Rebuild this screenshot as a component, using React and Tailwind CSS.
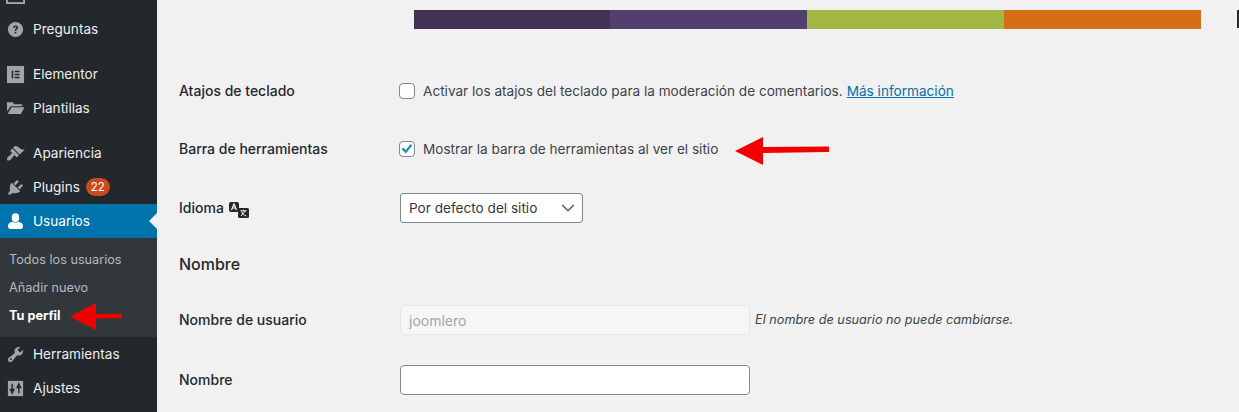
import { ChevronDown } from "lucide-react";

const font = { fontFamily: '"Inter", "Liberation Sans", sans-serif' };

const icons = {
  comments: (
    <svg viewBox="0 0 20 20" className="w-full h-full" fill="none">
      <rect x="1" y="1" width="18" height="18" stroke="#a0a5aa" strokeWidth="2" />
    </svg>
  ),
  help: (
    <svg viewBox="0 0 20 20" className="w-full h-full">
      <circle cx="10" cy="10" r="8" fill="#a0a5aa" />
      <path d="M7.4 8.2c0-1.6 1.2-2.5 2.7-2.5s2.6.9 2.6 2.2c0 1.9-2 1.9-2 3.5H9.1c0-2.3 1.8-2.4 1.8-3.4 0-.5-.4-.8-.9-.8-.6 0-.9.4-.9 1z" fill="#23282d" />
      <rect x="9.1" y="12.4" width="1.7" height="1.7" fill="#23282d" />
    </svg>
  ),
  elementor: (
    <svg viewBox="0 0 20 20" className="w-full h-full">
      <rect x="1" y="1" width="18" height="18" fill="#a0a5aa" />
      <rect x="6" y="6" width="1.6" height="8" fill="#23282d" />
      <rect x="9.2" y="6" width="5" height="1.6" fill="#23282d" />
      <rect x="9.2" y="9.2" width="5" height="1.6" fill="#23282d" />
      <rect x="9.2" y="12.4" width="5" height="1.6" fill="#23282d" />
    </svg>
  ),
  folder: (
    <svg viewBox="0 0 20 20" className="w-full h-full" fill="#a0a5aa">
      <path d="M1 3.500h6l1.500 2H17v2H5L1 13z" />
      <path d="M5.800 8.800H19.500l-3.800 7H1.600z" />
    </svg>
  ),
  brush: (
    <svg viewBox="0 0 20 20" className="w-full h-full" fill="#a0a5aa">
      <path d="M14.480 11.060L7.410 3.990l1.500-1.500c.5-.56 2.300-.47 3.510.32 1.210.8 1.430 1.280 2.910 2.100 1.180.64 2.450 1.260 4.450.85zm-.71.71L6.700 4.700 4.930 6.470c-.39.39-.39 1.020 0 1.410l1.060 1.060c.39.39.39 1.030 0 1.420-.6.6-1.430 1.110-2.210 1.690-.35.26-.7.53-1.010.84C1.430 14.230.4 16.080 1.400 17.070c.99 1 2.840-.03 4.180-1.360.31-.31.58-.66.85-1.020.57-.78 1.080-1.610 1.690-2.210.39-.39 1.020-.39 1.410 0l1.060 1.060c.39.39 1.020.39 1.410 0z" />
    </svg>
  ),
  plugin: (
    <svg viewBox="0 0 20 20" className="w-full h-full" fill="#a0a5aa">
      <path d="M13.110 4.360L9.870 7.600 8 5.730l3.240-3.240c.35-.34 1.050-.2 1.560.32.52.51.66 1.210.31 1.550zm-8 1.770l.91-1.120 9.010 9.010-1.190.84c-.71.71-2.630 1.160-3.820 1.160H6.140L4.900 17.260c-.59.59-1.540.59-2.120 0-.59-.58-.59-1.530 0-2.120l1.240-1.240v-3.880c0-1.130.4-3.190 1.090-3.890zm7.260 3.970l3.240-3.240c.34-.35 1.040-.21 1.550.31.52.51.66 1.210.31 1.550l-3.240 3.250z" />
    </svg>
  ),
  user: (
    <svg viewBox="0 0 20 20" className="w-full h-full" fill="#fff">
      <ellipse cx="10" cy="6" rx="4" ry="4.600" />
      <path d="M2 15c0-3 2.500-4.600 5-4.800 1.600 1.200 4.400 1.200 6 0 2.500.2 5 1.800 5 4.800 0 1.700-1.500 3-3.300 3H5.300C3.500 18 2 16.700 2 15z" />
    </svg>
  ),
  wrench: (
    <svg viewBox="0 0 20 20" className="w-full h-full" fill="#a0a5aa">
      <path d="M16.680 9.770c-1.340 1.340-3.300 1.670-4.950.99l-5.410 6.520c-.99.99-2.590.99-3.580 0s-.99-2.590 0-3.570l6.520-5.420c-.68-1.650-.35-3.610.99-4.950 1.280-1.280 3.120-1.620 4.720-1.060l-2.890 2.890 2.820 2.820 2.860-2.870c.56 1.600.22 3.440-1.080 4.670zM4.420 15.580c.39.39 1.020.39 1.410 0s.39-1.020 0-1.410-1.020-.39-1.410 0-.39 1.020 0 1.410z" />
    </svg>
  ),
  settings: (
    <svg viewBox="0 0 20 20" className="w-full h-full">
      <rect x="2" y="2" width="16" height="16" fill="#a0a5aa" />
      <path d="M6.500 5v6M4.700 11h3.600L6.500 14.800zM13.500 15V9M11.700 9h3.600l-1.800-3.800z" stroke="#23282d" strokeWidth="1.500" fill="#23282d" />
    </svg>
  ),
};

function NavItem({ icon, label, badge, active }) {
  return (
    <div className={`relative flex items-center h-[34px] ${active ? "bg-[#0073aa] text-white" : "text-[#eeeeee]"}`}>
      <span className="w-[30px] flex justify-center shrink-0 mr-[3px]">
        <span className="w-[19px] h-[19px] block">{icons[icon]}</span>
      </span>
      <span className="text-[13.6px]">{label}</span>
      {badge && (
        <span className="ml-[6px] h-[18px] px-[5px] rounded-full bg-[#ca4a1f] text-[11.5px] leading-[18px] text-white">
          {badge}
        </span>
      )}
      {active && (
        <span className="absolute right-0 top-[9px] w-0 h-0 border-y-[8px] border-y-transparent border-r-[8px] border-r-[#f1f1f1]" />
      )}
    </div>
  );
}

function Row({ label, extra, className, labelClass, children }) {
  return (
    <div className={`flex items-center ${className}`}>
      <div className={`w-[243px] pl-[22px] shrink-0 flex items-center gap-[5px] text-[14px] font-medium text-[#23282d] ${labelClass}`}>
        {label}
        {extra}
      </div>
      {children}
    </div>
  );
}

export default function App() {
  return (
    <div className="relative flex h-[412px] w-[1239px] overflow-hidden bg-[#f1f1f1]" style={font}>
      {/* sidebar */}
      <aside className="w-[157px] shrink-0 bg-[#23282d]">
        <div className="-mt-[23px]">
          <NavItem icon="comments" label="Comentarios" />
          <div className="mt-[1px]">
            <NavItem icon="help" label="Preguntas" />
          </div>
        </div>
        <div className="mt-[11px]">
          <NavItem icon="elementor" label="Elementor" />
          <NavItem icon="folder" label="Plantillas" />
        </div>
        <div className="mt-[11px]">
          <NavItem icon="brush" label="Apariencia" />
          <NavItem icon="plugin" label="Plugins" badge="22" />
          <NavItem icon="user" label="Usuarios" active />
        </div>
        <div className="h-[99px] bg-[#32373c] pt-[8px] pl-[9px] text-[12.7px] text-[#b4b9be]">
          <div className="h-[28px] leading-[28px]">Todos los usuarios</div>
          <div className="h-[28px] leading-[28px]">Añadir nuevo</div>
          <div className="h-[28px] leading-[28px] font-bold text-white">Tu perfil</div>
        </div>
        <NavItem icon="wrench" label="Herramientas" />
        <NavItem icon="settings" label="Ajustes" />
      </aside>

      {/* profile form */}
      <main className="flex-1 text-[13.6px] text-[#3c434a]">
        <div className="flex items-start h-[76px] pt-[10px]">
          <div className="ml-[257px] flex h-[19px]">
            <div className="w-[196px] bg-[#413256]" />
            <div className="w-[197px] bg-[#523f6d]" />
            <div className="w-[197px] bg-[#a3b745]" />
            <div className="w-[197px] bg-[#d46f15]" />
          </div>
          <div className="ml-[36px] h-[18px] w-[2px] bg-[#23282d]" />
        </div>

        <Row label="Atajos de teclado" className="h-[29px]">
          <span className="w-[16px] h-[16px] rounded-[4px] border border-[#7e8993] bg-white shrink-0 -ml-[1px]" />
          <span className="ml-[8px] pt-[2px]">Activar los atajos del teclado para la moderación de comentarios.</span>
          <a className="ml-[4px] pt-[2px] text-[#0073aa] underline">Más información</a>
        </Row>

        <Row label="Barra de herramientas" className="h-[29px] mt-[29px]">
          <span className="flex items-center justify-center w-[16px] h-[16px] rounded-[4px] border border-[#7e8993] bg-white shrink-0 -ml-[1px]">
            <svg viewBox="0 0 16 16" className="w-[16px] h-[16px] shrink-0">
              <path d="M2.500 8.200l1.800-1.700 2.500 2.600 4.800-6 1.800 1.500-6.500 8z" fill="#2a8eb5" />
            </svg>
          </span>
          <span className="ml-[8px] pt-[2px]">Mostrar la barra de herramientas al ver el sitio</span>
        </Row>

        <Row
          label="Idioma"
          labelClass="pb-[2px]"
          className="h-[30px] mt-[30px]"
          extra={
            <svg viewBox="0 0 20 18" className="w-[20px] h-[18px] mt-[3px]">
              <rect x="0" y="2" width="10" height="10" rx="2" fill="#23282d" />
              <path d="M2.500 10l2.500-6 2.500 6M3.500 8h3" stroke="#fff" strokeWidth="1.200" fill="none" />
              <rect x="9" y="8" width="11" height="10" rx="1.500" fill="#23282d" />
              <path d="M11.500 10.800h6M14.500 9.800v1M12 16l4.300-5M12.500 11.500c.8 2 2.300 3.600 4.800 4.500" stroke="#fff" strokeWidth="1" fill="none" />
            </svg>
          }
        >
          <div className="flex items-center justify-between w-[183px] h-[30px] rounded-[3px] border border-[#7e8993] bg-white pl-[8px] pr-[3px] text-[#32373c]">
            <span>Por defecto del sitio</span>
            <ChevronDown className="w-[22px] h-[22px] text-[#50575e]" strokeWidth={1.500} />
          </div>
        </Row>

        <h2 className="mt-[29px] pl-[22px] text-[16px] leading-[24px] font-medium text-[#23282d]">Nombre</h2>

        <Row label="Nombre de usuario" labelClass="pb-[2px]" className="h-[30px] mt-[29px]">
          <div className="flex items-center w-[350px] h-[30px] rounded-[4px] border border-[#e8e8e8] bg-[#f6f6f6] px-[8px] text-[14px] text-[#a0a5aa]">
            joomlero
          </div>
          <span className="ml-[5px] text-[12.7px] italic">El nombre de usuario no puede cambiarse.</span>
        </Row>

        <Row label="Nombre" labelClass="pb-[2px]" className="h-[30px] mt-[30px]">
          <div className="w-[350px] h-[30px] rounded-[4px] border border-[#7e8993] bg-white" />
        </Row>
      </main>

      {/* red arrows over the page */}
      <svg viewBox="0 0 52 27" className="absolute left-[70px] top-[303px] w-[52px] h-[27px]">
        <path d="M0 13.500L26 0v11l26-.5V15l-26 .5V27z" fill="#f20000" />
      </svg>
      <svg viewBox="0 0 94 28" className="absolute left-[735px] top-[137px] w-[94px] h-[28px]">
        <path d="M0 14L28 0v10l66-.5V15l-66 1v12z" fill="#f20000" />
      </svg>
    </div>
  );
}
